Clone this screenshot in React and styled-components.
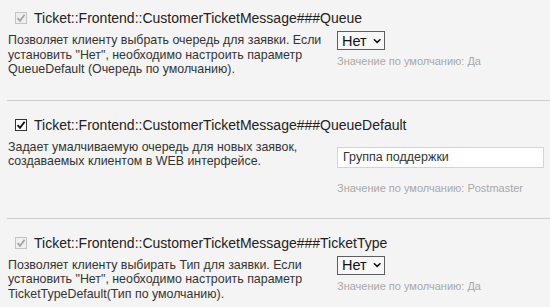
import React from "react";
import styled, { createGlobalStyle } from "styled-components";

const Global = createGlobalStyle`
  html, body { margin: 0; padding: 0; background: #f4f4f4; }
  body { font-family: "Liberation Sans", Arial, sans-serif; color: #333; }
`;

const Page = styled.div`
  width: 550px;
  height: 307px;
  overflow: hidden;
  background: #f4f4f4;
`;

const Setting = styled.section`
  padding: 15px 0 23px 1px;
  border-bottom: 1px solid #cdcdcd;
  margin-left: 7px;
  &:first-child { padding-top: 9px; }
  &:last-child { border-bottom: none; }
`;

const TitleRow = styled.div`
  display: flex;
  align-items: center;
  gap: 7px;
  padding-left: 7px;
  height: 18px;
  font-size: 14px;
  line-height: 18px;
  color: #222;
`;

const Box = styled.span`
  display: inline-flex;
  align-items: center;
  justify-content: center;
  box-sizing: border-box;
  width: 12px;
  height: 12px;
  border: 1px solid ${(p) => (p.$disabled ? "#c4c4c4" : "#333")};
  background: ${(p) => (p.$disabled ? "#efefef" : "#fff")};
  color: ${(p) => (p.$disabled ? "#a4a4a4" : "#111")};
`;

const Body = styled.div`
  display: grid;
  grid-template-columns: 329px 1fr;
  margin-top: 4px;
`;

const Desc = styled.p`
  margin: 0;
  padding-top: 2px;
  font-size: 12.4px;
  line-height: 14.5px;
  color: #333;
`;

const Control = styled.div`
  display: flex;
  flex-direction: column;
  align-items: flex-start;
`;

const Select = styled.div`
  box-sizing: border-box;
  display: flex;
  align-items: center;
  gap: 6px;
  height: 19px;
  width: 48px;
  padding: 0 3px 0 4px;
  border: 1px solid #5e5e5e;
  background: #f8f8f8;
  font-size: 14.5px;
  color: #111;
  margin-bottom: 4px;
`;

const TextInput = styled.div`
  box-sizing: border-box;
  width: 207px;
  height: 21px;
  margin: 9px 0 13px;
  padding: 0 5px;
  border: 1px solid #d4d4d4;
  background: #fff;
  font-size: 12.5px;
  line-height: 19px;
  color: #333;
`;

const Hint = styled.div`
  font-size: 11px;
  line-height: 14px;
  color: #a8a8a8;
`;

const Check = () => (
  <svg width="10" height="10" viewBox="0 0 10 10">
    <path d="M1.5 5.2 L4 7.8 L8.6 1.8" fill="none" stroke="currentColor" strokeWidth="1.8" />
  </svg>
);

const Chevron = () => (
  <svg width="12" height="8" viewBox="0 0 12 8">
    <path d="M1.2 1.4 L6 6 L10.8 1.4" fill="none" stroke="#111" strokeWidth="2.2" />
  </svg>
);

const settings = [
  {
    name: "Ticket::Frontend::CustomerTicketMessage###Queue",
    disabled: true,
    desc: 'Позволяет клиенту выбрать очередь для заявки. Если установить "Нет", необходимо настроить параметр QueueDefault (Очередь по умолчанию).',
    control: "select",
    value: "Нет",
    hint: "Значение по умолчанию: Да",
  },
  {
    name: "Ticket::Frontend::CustomerTicketMessage###QueueDefault",
    disabled: false,
    desc: "Задает умалчиваемую очередь для новых заявок, создаваемых клиентом в WEB интерфейсе.",
    control: "input",
    value: "Группа поддержки",
    hint: "Значение по умолчанию: Postmaster",
  },
  {
    name: "Ticket::Frontend::CustomerTicketMessage###TicketType",
    disabled: true,
    desc: 'Позволяет клиенту выбирать Тип для заявки. Если установить "Нет", необходимо настроить параметр TicketTypeDefault(Тип по умолчанию).',
    control: "select",
    value: "Нет",
    hint: "Значение по умолчанию: Да",
  },
];

export default function App() {
  return (
    <Page>
      <Global />
      {settings.map((s) => (
        <Setting key={s.name}>
          <TitleRow>
            <Box $disabled={s.disabled}>
              <Check />
            </Box>
            <span>{s.name}</span>
          </TitleRow>
          <Body>
            <Desc>{s.desc}</Desc>
            <Control>
              {s.control === "select" ? (
                <Select>
                  <span>{s.value}</span>
                  <Chevron />
                </Select>
              ) : (
                <TextInput>{s.value}</TextInput>
              )}
              <Hint>{s.hint}</Hint>
            </Control>
          </Body>
        </Setting>
      ))}
    </Page>
  );
}
